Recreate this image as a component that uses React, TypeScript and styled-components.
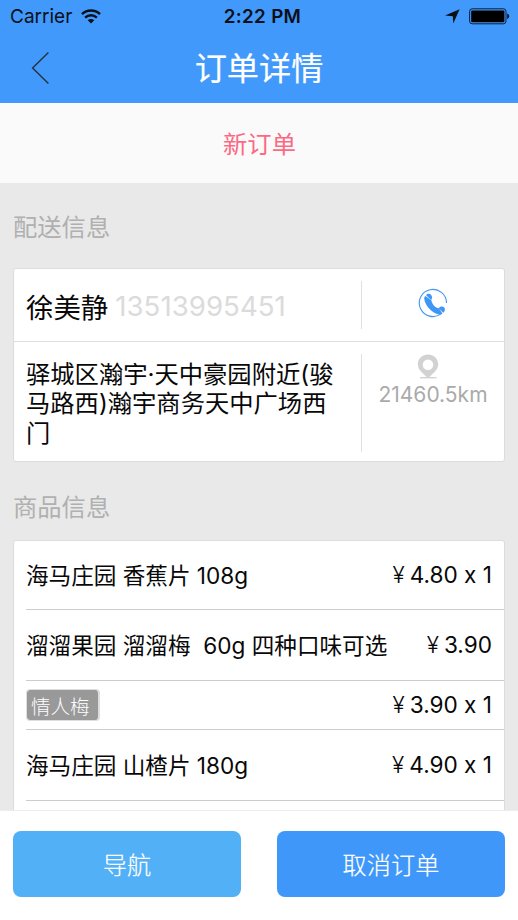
import React from "react";
import styled, { createGlobalStyle } from "styled-components";

const Global = createGlobalStyle`
  * { box-sizing: border-box; }
  body { margin: 0; background: #fff; }
`;

const Screen = styled.div`
  width: 518px;
  height: 920px;
  display: flex;
  flex-direction: column;
  overflow: hidden;
  background: #e9e9e9;
  color: #080808;
  font-family: Inter, "Noto Sans CJK SC", sans-serif;
  font-weight: 390;
  font-feature-settings: "calt" 0;
  white-space: pre;
`;

const Header = styled.header`
  height: 103px;
  flex: none;
  background: #4199fb;
`;

const StatusBar = styled.div`
  height: 33px;
  padding: 0 8px 0 10px;
  display: grid;
  grid-template-columns: 1fr auto 1fr;
  align-items: center;
  color: #0a0f18;
  font-size: 19px;
  font-weight: 400;
`;

const StatusSide = styled.div<{ $end?: boolean }>`
  display: flex;
  align-items: center;
  gap: 9px;
  justify-content: ${(p) => (p.$end ? "flex-end" : "flex-start")};
`;

const Clock = styled.span`
  margin-left: 5px;
  font-size: 18.8px;
  font-weight: 600;
  letter-spacing: 0.3px;
`;

const NavBar = styled.div`
  height: 70px;
  padding-left: 31px;
  display: grid;
  grid-template-columns: 40px 1fr 71px;
  align-items: center;
`;

const Title = styled.h1`
  margin: 0;
  padding-top: 1px;
  font-size: 32.2px;
  line-height: 48px;
  font-weight: 400;
  text-align: center;
  color: #fff;
  -webkit-text-stroke: 0.2px #fff;
`;

const OrderState = styled.div`
  height: 80px;
  flex: none;
  padding: 0 0 1px 1px;
  display: flex;
  align-items: center;
  justify-content: center;
  background: #fafafa;
  color: #fb6a82;
  font-size: 24.3px;
`;

const Content = styled.main`
  flex: 1;
  min-height: 0;
  overflow: hidden;
  padding: 0 13px;
`;

const SectionLabel = styled.h2<{ $height: number; $top: number }>`
  margin: 0;
  height: ${(p) => p.$height}px;
  padding-top: ${(p) => p.$top}px;
  font-size: 24.3px;
  line-height: 36px;
  font-weight: inherit;
  color: #b0b0b0;
`;

const Card = styled.section`
  border: 1px solid #dcdcdc;
  border-radius: 3px;
  background: #fff;
`;

const InfoRow = styled.div<{ $height: number; $line?: boolean }>`
  height: ${(p) => p.$height}px;
  display: flex;
  border-bottom: ${(p) => (p.$line ? "1.5px solid #dedede" : "none")};
`;

const InfoMain = styled.div`
  width: 347px;
  flex: none;
  padding-left: 12px;
  display: flex;
  align-items: center;
`;

const InfoAside = styled.div<{ $top: number; $bottom: number }>`
  flex: 1;
  margin: 12px 0 ${(p) => p.$bottom}px;
  padding-top: ${(p) => p.$top}px;
  border-left: 1px solid #e0e0e0;
  display: flex;
  flex-direction: column;
  align-items: center;
`;

const PinHolder = styled.span`
  height: 25px;
  padding-right: 10px;
  display: flex;
`;

const Person = styled.span`
  padding-top: 1px;
  font-size: 27.4px;
`;

const Phone = styled.span`
  margin-left: 7px;
  padding-top: 2px;
  font-size: 27.6px;
  letter-spacing: 0.05px;
  color: #dbdbdb;
`;

const Address = styled.p`
  margin: 0;
  align-self: flex-start;
  padding-top: 18px;
  font-size: 24.3px;
  line-height: 29.3px;
`;

const Distance = styled.span`
  margin-top: 3px;
  font-size: 21px;
  line-height: 26px;
  color: #aaa;
`;

const ItemRow = styled.div<{ $height: number }>`
  height: ${(p) => p.$height}px;
  margin-left: 12px;
  padding-right: 12px;
  border-bottom: 1px solid #ccccd0;
  display: flex;
  align-items: center;
  justify-content: space-between;
  font-size: 22.6px;
`;

const ItemName = styled.span`
  padding-bottom: 2px;
`;

const Price = styled.span`
  padding-bottom: 1px;
  display: flex;
  align-items: center;
  gap: 5px;
`;

const Yen = styled.span`
  font-size: 22.6px;
  font-weight: 350;
`;

const Tag = styled.span`
  height: 32px;
  width: 74px;
  padding-left: 4px;
  display: flex;
  align-items: center;
  border: 1px solid #dedede;
  border-right-width: 2px;
  border-radius: 4px;
  background: #999;
  background-clip: padding-box;
  color: #fff;
  font-size: 19.5px;
  font-weight: 300;
`;

const Footer = styled.footer`
  height: 110px;
  flex: none;
  padding: 20px 13px 0;
  border-top: 1px solid #ececf1;
  display: flex;
  justify-content: space-between;
  background: #fff;
`;

const ActionButton = styled.button<{ $color: string }>`
  width: 228px;
  height: 66px;
  padding: 0 0 2px;
  border: 0;
  border-radius: 8px;
  background: ${(p) => p.$color};
  color: #fff;
  font-family: inherit;
  font-weight: 300;
  font-size: 24.2px;
  -webkit-text-stroke: 0.2px #fff;
`;

const WifiIcon = () => (
  <svg width="20" height="15" viewBox="0 0 20 15" fill="none" stroke="#0a0f18">
    <path d="M1 5.2C6 .4 14 .4 19 5.2" strokeWidth="2.5" />
    <path d="M4.1 8.6c3.4-3.1 8.4-3.1 11.8 0" strokeWidth="2.4" />
    <path d="M6.7 11.2c1.9-1.7 4.7-1.7 6.6 0L10 14.6Z" fill="#0a0f18" stroke="none" />
  </svg>
);

const LocationIcon = () => (
  <svg width="15" height="15" viewBox="0 0 15 15" fill="#0a0f18">
    <path d="M14.6.3 8.3 14.4 7.8 7.2 0 6.4Z" />
  </svg>
);

const BatteryIcon = () => (
  <svg width="41" height="17" viewBox="0 0 41 17">
    <rect x=".6" y=".8" width="36.4" height="15" rx="2.6" fill="none" stroke="#0a1e38" />
    <rect x="2.2" y="2.4" width="33.2" height="11.8" rx="1" fill="#000" />
    <path d="M38.2 5.6c2.6.8 2.6 4.6 0 5.4Z" fill="#0a1422" />
  </svg>
);

const BackIcon = () => (
  <svg width="20" height="34" viewBox="0 0 20 34" fill="none" stroke="#26313f" strokeWidth="1.4">
    <path d="M17.4 1.6 1.6 17 17.4 32.4" />
  </svg>
);

const CallIcon = () => (
  <svg width="30" height="30" viewBox="0 0 30 30">
    <path d="M28.5 15A13.6 13.6 0 1 0 23 25.9" fill="none" stroke="#3e97f5" strokeWidth="1.1" />
    <path
      d="M6.2 10.2C6.4 17 14.3 25.6 21 26.5 22.3 26.7 23.7 26.3 24.4 25.4L21 20.2C18 20.5 13.8 16 13.4 12.2L7.4 7.9C6.6 8.5 6.2 9.3 6.2 10.2Z"
      fill="#3e97f5"
    />
    <path d="M8.1 7.2C9.5 5.4 11.9 5.5 13.1 6.9 14.5 8.3 14.3 10.3 13.2 11.9Z" fill="#3e97f5" />
    <path d="M20.6 20.2C22 18.3 24.4 17.9 26 19.2 27.6 20.7 27 23.2 25.3 24.8Z" fill="#3e97f5" />
  </svg>
);

const PinIcon = () => (
  <svg width="22" height="25" viewBox="0 0 22 25">
    <path
      fillRule="evenodd"
      d="M11 .4C5.2.4.8 4.7.8 10.1c0 5.8 4.2 8.3 8.2 12.4 1.2 1 2.8 1 4 0 4-4.1 8.2-6.6 8.2-12.4C21.2 4.7 16.8.4 11 .4Zm0 5.1a5.3 5.3 0 1 1 0 10.6 5.3 5.3 0 0 1 0-10.6Z"
      fill="#d2d2d2"
    />
    <path d="M3 23.7h16.5" stroke="#d2d2d2" strokeWidth="1.4" />
  </svg>
);

type Item = { name: string; price: string; height: number; tag?: boolean };

const items: Item[] = [
  { name: "海马庄园 香蕉片 108g", price: "4.80 x 1", height: 69 },
  { name: "溜溜果园 溜溜梅  60g 四种口味可选", price: "3.90", height: 71 },
  { name: "情人梅", price: "3.90 x 1", height: 49, tag: true },
  { name: "海马庄园 山楂片 180g", price: "4.90 x 1", height: 71 },
  { name: "", price: "", height: 71 },
];

export default function App() {
  return (
    <Screen lang="zh-CN">
      <Global />
      <Header>
        <StatusBar>
          <StatusSide>
            <span>Carrier</span>
            <WifiIcon />
          </StatusSide>
          <Clock>2:22 PM</Clock>
          <StatusSide $end>
            <LocationIcon />
            <BatteryIcon />
          </StatusSide>
        </StatusBar>
        <NavBar>
          <BackIcon />
          <Title>订单详情</Title>
        </NavBar>
      </Header>
      <OrderState>新订单</OrderState>
      <Content>
        <SectionLabel $height={85} $top={26}>配送信息</SectionLabel>
        <Card>
          <InfoRow $height={73} $line>
            <InfoMain>
              <Person>徐美静</Person>
              <Phone>13513995451</Phone>
            </InfoMain>
            <InfoAside $top={7} $bottom={12}>
              <CallIcon />
            </InfoAside>
          </InfoRow>
          <InfoRow $height={119}>
            <InfoMain>
              <Address>{"驿城区瀚宇·天中豪园附近(骏\n马路西)瀚宇商务天中广场西\n门"}</Address>
            </InfoMain>
            <InfoAside $top={0} $bottom={9}>
              <PinHolder>
                <PinIcon />
              </PinHolder>
              <Distance>21460.5km</Distance>
            </InfoAside>
          </InfoRow>
        </Card>
        <SectionLabel $height={78} $top={27}>商品信息</SectionLabel>
        <Card>
          {items.map((item, i) => (
            <ItemRow key={i} $height={item.height}>
              {item.tag ? <Tag>{item.name}</Tag> : <ItemName>{item.name}</ItemName>}
              {item.price && (
                <Price>
                  <Yen>¥</Yen>
                  <span>{item.price}</span>
                </Price>
              )}
            </ItemRow>
          ))}
        </Card>
      </Content>
      <Footer>
        <ActionButton $color="#52b0f6">导航</ActionButton>
        <ActionButton $color="#3f98f9">取消订单</ActionButton>
      </Footer>
    </Screen>
  );
}
